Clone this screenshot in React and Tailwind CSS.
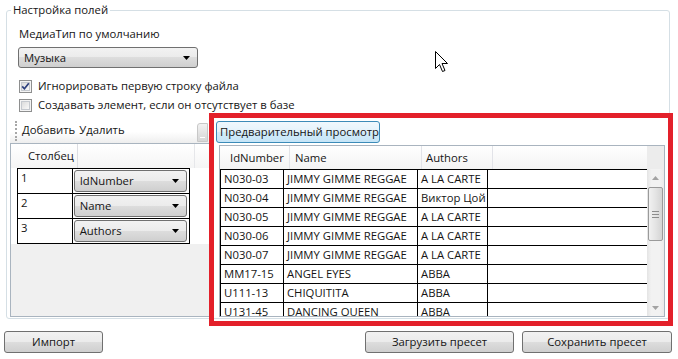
const btn =
  "bg-[linear-gradient(#f2f2f2_0%,#ebebeb_50%,#dddddd_50%,#cfcfcf_100%)] border border-[#707070] rounded-[3px]";

const rows = [
  ["N030-03", "JIMMY GIMME REGGAE", "A LA CARTE"],
  ["N030-04", "JIMMY GIMME REGGAE", "Виктор Цой"],
  ["N030-05", "JIMMY GIMME REGGAE", "A LA CARTE"],
  ["N030-06", "JIMMY GIMME REGGAE", "A LA CARTE"],
  ["N030-07", "JIMMY GIMME REGGAE", "A LA CARTE"],
  ["MM17-15", "ANGEL EYES", "ABBA"],
  ["U111-13", "CHIQUITITA", "ABBA"],
  ["U131-45", "DANCING QUEEN", "ABBA"],
];

function Arrow({ color = "#000" }) {
  return (
    <svg width="7" height="4" viewBox="0 0 7 4">
      <path d="M0 0H7L3.5 4Z" fill={color} />
    </svg>
  );
}

function Combo({ label, className }) {
  return (
    <div className={`${btn} flex items-center justify-between pl-[5px] pr-[7px] ${className}`}>
      <span className="leading-[16px]">{label}</span>
      <Arrow />
    </div>
  );
}

function Check({ checked, label }) {
  return (
    <div className="flex items-center h-[16px]">
      <svg width="13" height="13" viewBox="0 0 13 13">
        <defs>
          <linearGradient id={checked ? "cb1" : "cb2"} x1="0" y1="0" x2="1" y2="1">
            <stop offset="0" stopColor="#dadada" />
            <stop offset="1" stopColor="#fbfbfb" />
          </linearGradient>
        </defs>
        <rect x="0.5" y="0.5" width="12" height="12" fill="#f4f4f4" stroke="#8e8f8f" />
        <rect x="2.5" y="2.5" width="8" height="8" fill={`url(#${checked ? "cb1" : "cb2"})`} stroke="#c5c9cf" />
        {checked && <path d="M3.2 6.4L5.4 8.8L9.8 3.2" fill="none" stroke="#2c3f7d" strokeWidth="1.7" />}
      </svg>
      <span className="ml-[6px] leading-[16px]">{label}</span>
    </div>
  );
}

function ColumnsGrid() {
  const items = ["IdNumber", "Name", "Authors"];
  return (
    <div className="h-[174px] border border-[#a9b4bf] bg-[#f0f0f0] flex flex-col w-[202px]">
      <div className="h-[24px] flex bg-[linear-gradient(#ffffff,#f5f5f5)]">
        <div className="w-[12px]" />
        <div className="w-[55px] border-r border-[#dcdde2] pl-[5px] leading-[24px]">Столбец</div>
        <div className="w-[117px] border-r border-[#e6e7ea]" />
      </div>
      <div className="flex">
        <div className="w-[6px] bg-white h-[76px]" />
        <div className="border-l border-t border-black bg-white w-[173px]">
          {items.map((it, i) => (
            <div key={it} className="h-[25px] border-b border-black flex">
              <div className="w-[55px] border-r border-black pl-[3px] leading-[18px]">{i + 1}</div>
              <div className="w-[118px] border-r border-black pl-[1px] pt-[1px]">
                <Combo label={it} className="w-[113px] h-[22px]" />
              </div>
            </div>
          ))}
        </div>
        <div className="flex-1 bg-white h-[76px]" />
      </div>
    </div>
  );
}

function PreviewGrid() {
  return (
    <div className="w-[446px] h-[172px] border border-[#a9b4bf] flex flex-col bg-white">
      <div className="h-[23px] flex bg-[linear-gradient(#ffffff,#f3f3f3)]">
        <div className="w-[6px]" />
        <div className="w-[64px] border-r border-[#e2e3e8] pl-[4px] leading-[23px]">IdNumber</div>
        <div className="w-[132px] border-r border-[#e2e3e8] pl-[5px] leading-[23px]">Name</div>
        <div className="w-[71px] border-r border-[#e2e3e8] pl-[4px] leading-[23px]">Authors</div>
        <div className="w-[154px]" />
        <div className="flex-1 bg-[#ececec]" />
      </div>
      <div className="flex flex-1 min-h-0">
        <div className="w-[427px] border-l border-t border-black overflow-hidden">
          {rows.map((r, i) => (
            <div key={i} className="h-[19px] border-b border-black flex leading-[18px]">
              <div className="w-[63px] border-r border-black pl-[3px]">{r[0]}</div>
              <div className="w-[134px] border-r border-black pl-[3px]">{r[1]}</div>
              <div className="w-[70px] border-r border-black pl-[3px]">{r[2]}</div>
            </div>
          ))}
        </div>
        <div className="flex-1 flex flex-col bg-[linear-gradient(90deg,#e4e4e4,#f2f2f2_25%,#f2f2f2_75%,#eaeaea)]">
          <div className="h-[17px] flex items-center justify-center">
            <div className="rotate-180 flex">
              <Arrow color="#a3a3a3" />
            </div>
          </div>
          <div className="mx-[1px] mt-[1px] h-[54px] rounded-[2px] border border-[#9a9a9a] bg-[linear-gradient(90deg,#f1f1f1,#e4e4e4_50%,#d4d4d4)] flex flex-col items-center justify-center gap-[2px]">
            <div className="w-[7px] h-[1px] bg-[#8c8c8c]" />
            <div className="w-[7px] h-[1px] bg-[#8c8c8c]" />
            <div className="w-[7px] h-[1px] bg-[#8c8c8c]" />
          </div>
          <div className="mt-auto h-[17px] flex items-center justify-center">
            <Arrow color="#a3a3a3" />
          </div>
        </div>
      </div>
    </div>
  );
}

export default function App() {
  return (
    <div className="relative w-[678px] h-[359px] bg-white overflow-hidden whitespace-nowrap text-[11.3px] text-[#151515] font-['Open_Sans',sans-serif]">
      <fieldset className="ml-[6px] mt-[2px] w-[664px] h-[317px] border border-[#d5dfe5] rounded-[3px] p-0 min-w-0">
        <legend className="ml-[4px] px-[2px] leading-[16px]">Настройка полей</legend>
        <div className="ml-[12px] mt-[8px] leading-[16px]">МедиаТип по умолчанию</div>
        <Combo label="Музыка" className="ml-[11px] mt-[5px] w-[180px] h-[21px]" />
        <div className="ml-[12px] mt-[10px]">
          <Check checked label="Игнорировать первую строку файла" />
        </div>
        <div className="ml-[12px] mt-[3px]">
          <Check label="Создавать элемент, если он отсутствует в базе" />
        </div>
        <div className="mt-[5px] ml-[3px] h-[199px] flex">
          <div className="w-[199px] overflow-hidden">
            <div className="h-[25px] flex items-center bg-[linear-gradient(#ffffff,#ffffff_55%,#eeeeee)]">
              <div className="ml-[5px] h-[20px] border-l-2 border-dotted border-[#a7a7a7]" />
              <span className="ml-[5px]">Добавить</span>
              <span className="ml-[4px]">Удалить</span>
              <div className="ml-auto mr-[1px] w-[11px] h-[19px] mt-[4px] rounded-tl-[3px] bg-[linear-gradient(#f2f2f2,#d6d6d6)] border border-[#c8c8c8] flex items-end justify-center pb-[3px]">
                <div className="w-[5px] h-[1px] bg-white" />
              </div>
            </div>
            <ColumnsGrid />
          </div>
          <div className="flex-1 flex flex-col">
            <button className="ml-[7px] mt-[3px] w-[164px] h-[22px] rounded-[3px] border border-[#3c8bb8] bg-[linear-gradient(#f0f8fd,#e3f2fb_50%,#d2ebf9_50%,#c6e5f7)] leading-[18px] text-left pl-[3px]">
              Предварительный просмотр
            </button>
            <div className="ml-[10px] mt-[2px]">
              <PreviewGrid />
            </div>
          </div>
        </div>
      </fieldset>

      <div className="mt-[12px] flex h-[22px]">
        <button className={`${btn} ml-[4px] w-[99px]`}>Импорт</button>
        <button className={`${btn} ml-auto w-[149px]`}>Загрузить пресет</button>
        <button className={`${btn} ml-[8px] mr-[6px] w-[150px]`}>Сохранить пресет</button>
      </div>

      <div className="absolute left-[209px] top-[113px] w-[464px] h-[213px] border-[5px] border-[#e3202a] pointer-events-none" />

      <svg className="absolute left-[435px] top-[51px]" width="14" height="22" viewBox="0 0 14 22">
        <path d="M0.5 0.5V17.5L4.5 13.5L7.5 20.5L10 19.5L7 12.5H12.5Z" fill="#fff" stroke="#000" strokeLinejoin="round" />
      </svg>
    </div>
  );
}
